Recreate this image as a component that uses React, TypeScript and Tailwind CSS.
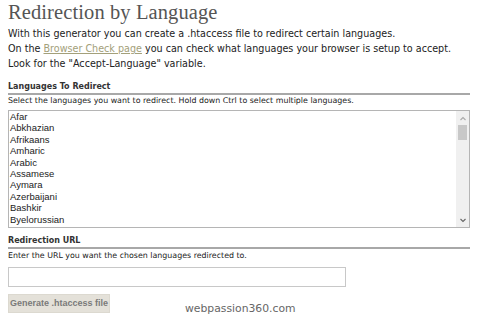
import React from "react";

const langs = [
  "Afar",
  "Abkhazian",
  "Afrikaans",
  "Amharic",
  "Arabic",
  "Assamese",
  "Aymara",
  "Azerbaijani",
  "Bashkir",
  "Byelorussian",
];

export default function App() {
  return (
    <div className="w-[480px] h-[315px] overflow-hidden bg-white relative font-['DejaVu_Sans',sans-serif] text-[#333]">
      <div className="pl-[8px] pr-[10px]">
        <h1 className="font-['Liberation_Serif',serif] text-[#555] text-[20.5px] leading-[24px] tracking-[0.1px]">
          Redirection by Language
        </h1>
        <div className="text-[9.6px] leading-[15px] mt-[2px] text-[#222]">
          <p>With this generator you can create a .htaccess file to redirect certain languages.</p>
          <p>
            On the <span className="text-[#a3a07a] underline">Browser Check page</span> you can check what
            languages your browser is setup to accept.
          </p>
          <p>Look for the "Accept-Language" variable.</p>
        </div>

        <div className="mt-[10px] text-[8px] font-bold text-[#333] leading-[12px]">Languages To Redirect</div>
        <div className="h-[2px] bg-[#a8a8a8] w-[462px]" />
        <div className="text-[7.9px] leading-[11px] text-[#222]">
          Select the languages you want to redirect. Hold down Ctrl to select multiple languages.
        </div>
        <div className="mt-[4px] w-[462px] h-[118px] border border-[#b5b5b5] flex">
          <div className="flex-1 pl-[1px] font-['Liberation_Sans',sans-serif] text-[9.5px] leading-[11.4px] text-[#222] overflow-hidden">
            {langs.map((l) => (
              <div key={l}>{l}</div>
            ))}
          </div>
          <div className="w-[13px] bg-[#f0f0f0] flex flex-col items-center">
            <svg width="8" height="8" viewBox="0 0 8 8" className="mt-[4px]">
              <path d="M1.5 5 L4 2.5 L6.5 5" stroke="#aaa" strokeWidth="1.1" fill="none" />
            </svg>
            <div className="w-[9px] h-[15px] bg-[#c8c8c8] mt-[2px]" />
            <div className="flex-1" />
            <svg width="8" height="8" viewBox="0 0 8 8" className="mb-[3px]">
              <path d="M1.5 3 L4 5.5 L6.5 3" stroke="#666" strokeWidth="1.1" fill="none" />
            </svg>
          </div>
        </div>

        <div className="mt-[7px] text-[8px] font-bold text-[#333] leading-[12px]">Redirection URL</div>
        <div className="h-[2px] bg-[#a8a8a8] w-[462px]" />
        <div className="text-[7.9px] leading-[11px] mt-[1px] text-[#222]">
          Enter the URL you want the chosen languages redirected to.
        </div>
        <div className="mt-[6px] w-[338px] h-[20px] border border-[#c8c8c8]" />
        <div className="mt-[7px] w-[102px] h-[19px] bg-[#e4e1d9] border border-[#dcd9d0] flex items-center justify-center font-['Liberation_Sans',sans-serif] text-[9px] font-bold text-[#7a7a7a]">
          Generate .htaccess file
        </div>
      </div>
      <div className="absolute left-[185px] top-[302px] font-['DejaVu_Sans',sans-serif] text-[10.8px] leading-[13px] text-[#666]">
        webpassion360.com
      </div>
    </div>
  );
}
